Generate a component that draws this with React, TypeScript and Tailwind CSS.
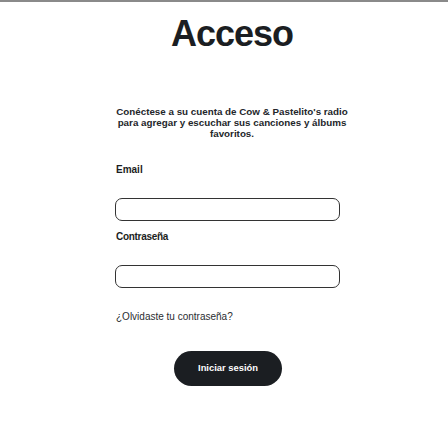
export default function App() {
    return (
        <div className="w-[448px] h-[448px] bg-white border-t-2 border-[#8a8a8a] text-[#1b1e22] font-['Liberation_Sans',Arial,sans-serif]">
            <h1 className="mt-[12px] ml-[16px] text-center text-[36px] leading-[40px] font-bold tracking-[-1px]">
                Acceso
            </h1>

            <p className="mt-[52px] ml-[110px] w-[244px] text-center text-[9.8px] leading-[11px] font-bold text-[#23262a]">
                Conéctese a su cuenta de Cow &amp; Pastelito's radio para agregar y escuchar sus canciones y álbums favoritos.
            </p>

            <form className="mt-[26px] ml-[115px] w-[225px] flex flex-col" onSubmit={e => e.preventDefault()}>
                <label className="pl-[1px] text-[10px] leading-[10px] font-bold text-[#1b1e22]">Email</label>
                <input
                    type="email"
                    className="mt-[23px] h-[23px] rounded-[7px] border-[1.5px] border-[#333] outline-none px-2 text-[10px]"
                />

                <label className="mt-[11px] pl-[1px] text-[10px] leading-[10px] font-bold tracking-[-0.3px] text-[#1b1e22]">
                    Contraseña
                </label>
                <input
                    type="password"
                    className="mt-[23px] h-[23px] rounded-[7px] border-[1.5px] border-[#333] outline-none px-2 text-[10px]"
                />

                <a href="#" className="mt-[24px] ml-[1px] text-[10px] leading-[10px] text-[#2a2d31]">
                    ¿Olvidaste tu contraseña?
                </a>

                <button
                    type="submit"
                    className="mt-[29px] ml-[59px] w-[108px] h-[35px] rounded-full bg-[#1b1e22] text-white text-[9.4px] font-bold"
                >
                    Iniciar sesión
                </button>
            </form>
        </div>
    );
}
